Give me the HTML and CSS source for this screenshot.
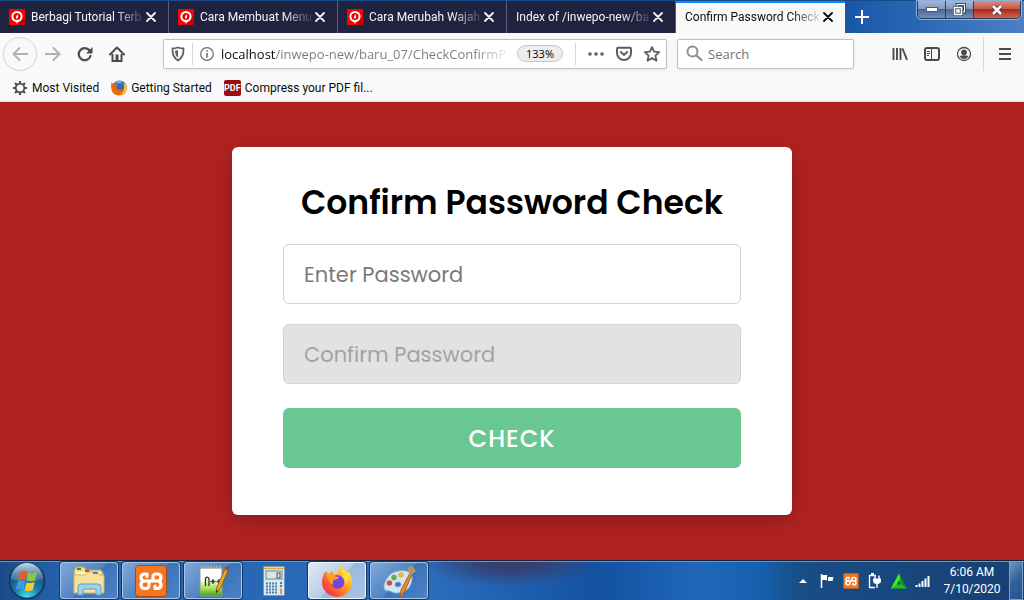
FILE: index.html
```
<!DOCTYPE html>
<html lang="en">
<head>
  <meta charset="UTF-8">
  <meta name="viewport" content="width=device-width, initial-scale=1.0">
  <title>Confirm Password Check</title>
  <link rel="stylesheet" href="styles.css">
</head>
<body>
  <svg class="sprite" aria-hidden="true">
    <symbol id="pin" viewBox="0 0 16 16">
      <rect width="16" height="16" fill="#f00"/>
      <path d="M11 11 L14 7 L16 9 V16 H8z" fill="#c80000"/>
      <path d="M5 11 H11 L8 15z" fill="#f5b5b5"/>
      <circle cx="8" cy="7.500" r="4.600" fill="#e00" stroke="#fff" stroke-width="2"/>
      <path d="M9 5 L7 7.500 V9.500 H8.500 L9 7.500z" fill="#fff"/>
    </symbol>
    <symbol id="close" viewBox="0 0 10 10">
      <path d="M1 1 L9 9 M9 1 L1 9" fill="none" stroke="currentColor" stroke-width="1.800" stroke-linecap="round"/>
    </symbol>
    <symbol id="xampp" viewBox="0 0 32 32">
      <rect x="0.500" y="0.500" width="31" height="31" rx="3" fill="#f37623" stroke="#a84a10"/>
      <path d="M12 11.500 V9 H10 Q6 9 6 12.500 Q6 16 10 16 Q6 16 6 20 Q6 23.500 10 23.500 H11 Q14 23.500 14 20 V18 Q14 16 16 16 Q18 16 18 14 V12 Q18 9 21 9 H22 Q26 9 26 12.500 Q26 16 22 16 Q26 16 26 20 Q26 23.500 22 23.500 H20 V21 M10 16 H22" fill="none" stroke="#fff" stroke-width="3.200" stroke-linejoin="round" stroke-linecap="round"/>
    </symbol>
  </svg>

  <header class="browser">
    <div class="tab-strip">
      <div class="tab">
        <svg class="favicon"><use href="#pin"/></svg>
        <button class="tab-title">Berbagi Tutorial Terb</button>
        <button class="tab-close" aria-label="Close tab"><svg><use href="#close"/></svg></button>
      </div>
      <div class="tab">
        <svg class="favicon"><use href="#pin"/></svg>
        <button class="tab-title">Cara Membuat Menu</button>
        <button class="tab-close" aria-label="Close tab"><svg><use href="#close"/></svg></button>
      </div>
      <div class="tab">
        <svg class="favicon"><use href="#pin"/></svg>
        <button class="tab-title">Cara Merubah Wajah</button>
        <button class="tab-close" aria-label="Close tab"><svg><use href="#close"/></svg></button>
      </div>
      <div class="tab">
        <button class="tab-title">Index of /inwepo-new/ba</button>
        <button class="tab-close" aria-label="Close tab"><svg><use href="#close"/></svg></button>
      </div>
      <div class="tab active">
        <button class="tab-title">Confirm Password Check</button>
        <button class="tab-close" aria-label="Close tab"><svg><use href="#close"/></svg></button>
      </div>
      <button class="new-tab" aria-label="New tab">
        <svg width="14" height="14"><path d="M7 0 V14 M0 7 H14" stroke="#fff" stroke-width="2"/></svg>
      </button>
      <div class="window-buttons">
        <button class="minimize" aria-label="Minimize">
          <svg width="12" height="6"><rect x="0.500" y="0.500" width="11" height="4" fill="#fff" stroke="#4b5870"/></svg>
        </button>
        <button class="restore" aria-label="Restore">
          <svg width="13" height="13"><path d="M4 1.500 H11.500 V9 H4z" fill="#8fa3c4" stroke="#3f4d68" stroke-width="3"/><path d="M4 1.500 H11.500 V9 H4z" fill="none" stroke="#fff"/><path d="M1.500 4.500 H8.500 V11.500 H1.500z" fill="#61759a" stroke="#3f4d68" stroke-width="3"/><path d="M1.500 4.500 H8.500 V11.500 H1.500z M4 7 H6 V9 H4z" fill="none" stroke="#fff" stroke-width="1.500"/></svg>
        </button>
        <button class="exit" aria-label="Close">
          <svg width="12" height="12"><path d="M2 2 L10 10 M10 2 L2 10" stroke="#54313a" stroke-width="4.500"/><path d="M2 2 L10 10 M10 2 L2 10" stroke="#fff" stroke-width="2.600"/></svg>
        </button>
      </div>
    </div>

    <div class="toolbar">
      <button class="tool back" aria-label="Back">
        <svg width="16" height="16"><path d="M15.500 8 H1.500 M7.500 2 L1.500 8 L7.500 14" fill="none" stroke="#b1b1b3" stroke-width="2" stroke-linecap="round" stroke-linejoin="round"/></svg>
      </button>
      <button class="tool" aria-label="Forward">
        <svg width="16" height="16"><path d="M0.500 8 H14.500 M8.500 2 L14.500 8 L8.500 14" fill="none" stroke="#b1b1b3" stroke-width="2" stroke-linecap="round" stroke-linejoin="round"/></svg>
      </button>
      <button class="tool" aria-label="Reload">
        <svg width="16" height="16"><path d="M12.500 4.500 A6 6 0 1 0 13.500 10" fill="none" stroke="#4a4a4f" stroke-width="2.200" stroke-linecap="round"/><path d="M15.500 1 V7.500 H9z" fill="#4a4a4f"/></svg>
      </button>
      <button class="tool" aria-label="Home">
        <svg width="16" height="16"><path d="M1 8.500 L8 1.500 L15 8.500" fill="none" stroke="#4a4a4f" stroke-width="2" stroke-linecap="round" stroke-linejoin="round"/><path d="M3.500 8 V15 H12.500 V8" fill="none" stroke="#4a4a4f" stroke-width="2"/><path d="M6.500 8.500 H9.500 V15 H6.500z" fill="#4a4a4f"/></svg>
      </button>

      <div class="field url-field">
        <svg width="14" height="16"><path d="M7 1.500 Q10 2.500 12.500 2.500 Q13 11 7 14.500 Q1 11 1.500 2.500 Q4 2.500 7 1.500z" fill="none" stroke="#5e5e62" stroke-width="1.800" stroke-linejoin="round"/><path d="M7 4 Q5.500 4.500 4 4.700 Q4.200 9.500 7 11.700z" fill="#5e5e62"/></svg>
        <span class="divider"></span>
        <svg width="14" height="14"><circle cx="7" cy="7" r="6.300" fill="none" stroke="#6a6a6e" stroke-width="1.200"/><path d="M7 6 V10.500 M7 3.200 V4.800" stroke="#6a6a6e" stroke-width="1.600"/></svg>
        <input type="text" class="url" aria-label="Address" value="localhost/inwepo-new/baru_07/CheckConfirmP">
        <button class="zoom">133%</button>
        <span class="divider"></span>
        <button class="page-action" aria-label="Page actions">
          <svg width="16" height="16"><g fill="#5e5e62"><circle cx="2" cy="8" r="1.800"/><circle cx="8" cy="8" r="1.800"/><circle cx="14" cy="8" r="1.800"/></g></svg>
        </button>
        <button class="page-action" aria-label="Save to Pocket">
          <svg width="16" height="16"><path d="M2 1.800 H14 Q15 1.800 15 3 V7 A7 7 0 0 1 1 7 V3 Q1 1.800 2 1.800z" fill="none" stroke="#5e5e62" stroke-width="2"/><path d="M4.800 6 L8 9 L11.200 6" fill="none" stroke="#5e5e62" stroke-width="2" stroke-linecap="round"/></svg>
        </button>
        <button class="page-action" aria-label="Bookmark this page">
          <svg width="16" height="16"><path d="M8 1 L10.100 5.700 L15.200 6.200 L11.400 9.600 L12.500 14.700 L8 12.100 L3.500 14.700 L4.600 9.600 L0.800 6.200 L5.900 5.700z" fill="none" stroke="#5e5e62" stroke-width="1.800" stroke-linejoin="round"/></svg>
        </button>
      </div>

      <div class="field search-field">
        <svg width="17" height="17"><circle cx="6.500" cy="6.500" r="5" fill="none" stroke="#8f8f92" stroke-width="2"/><path d="M10.200 10.200 L15.500 15" stroke="#8f8f92" stroke-width="2.200" stroke-linecap="round"/></svg>
        <input type="text" class="search" aria-label="Search" placeholder="Search">
      </div>

      <div class="tool-group">
        <button class="tool" aria-label="Library">
          <svg width="16" height="16"><path d="M1.500 2 V14 M5 2 V14 M8.500 2 V14 M10.500 2.500 L15 13.800" fill="none" stroke="#4a4a4f" stroke-width="1.900"/></svg>
        </button>
        <button class="tool" aria-label="Sidebars">
          <svg width="16" height="16"><rect x="1" y="2" width="14" height="12" rx="2" fill="none" stroke="#4a4a4f" stroke-width="2"/><path d="M7.500 2 V14" stroke="#4a4a4f"/><path d="M3 5.500 H6 M3 7.500 H6 M3 9.500 H5" stroke="#4a4a4f"/></svg>
        </button>
        <button class="tool" aria-label="Account">
          <svg width="16" height="16"><circle cx="8" cy="8" r="6.500" fill="none" stroke="#4a4a4f" stroke-width="1.300"/><circle cx="8" cy="6.300" r="2.900" fill="#4a4a4f"/><path d="M3.500 10 Q8 8.500 12.500 10 Q11 13 8 13 Q5 13 3.500 10z" fill="#4a4a4f"/></svg>
        </button>
      </div>
      <button class="tool menu" aria-label="Open menu">
        <svg width="14" height="14"><path d="M1 2 H13 M1 7 H13 M1 12 H13" stroke="#4a4a4f" stroke-width="2"/></svg>
      </button>
    </div>

    <nav class="bookmarks">
      <a href="#">
        <svg width="16" height="16"><circle cx="8" cy="8" r="4.300" fill="none" stroke="#4a4a4f" stroke-width="1.700"/><path d="M8 1 V3.500 M8 12.500 V15 M1 8 H3.500 M12.500 8 H15 M3 3 L4.800 4.800 M11.200 11.200 L13 13 M13 3 L11.200 4.800 M4.800 11.200 L3 13" stroke="#4a4a4f" stroke-width="2"/></svg>
        Most Visited
      </a>
      <a href="#">
        <svg width="16" height="16"><circle cx="8.500" cy="7.500" r="7" fill="#2a6fb8"/><path d="M4 2 Q8 0 12 2 Q9 4 6 3.500z" fill="#6db9e8"/><path d="M0.500 2.500 L3 4 Q6 3.500 7 5.500 Q5 6 5.500 8 Q7 11 11 9 Q8.500 13 13 8 Q13.500 5 12.500 3 Q16 5 15.800 9 Q14.500 15.500 8 15.500 Q1.500 15 0.300 9 Q-0.200 5 0.500 2.500z" fill="#e66a10"/><path d="M12.500 3 Q16 5 15.800 9 Q14.500 14.500 9 15 Q15 11 12.500 3z" fill="#fbc332"/></svg>
        Getting Started
      </a>
      <a href="#">
        <span class="pdf">PDF</span>
        Compress your PDF fil...
      </a>
    </nav>
  </header>

  <main class="page">
    <form class="card">
      <h1>Confirm Password Check</h1>
      <label class="hidden-label" for="password">Enter Password</label>
      <input type="password" id="password" placeholder="Enter Password">
      <label class="hidden-label" for="confirm">Confirm Password</label>
      <input type="password" id="confirm" placeholder="Confirm Password" disabled>
      <button type="button" class="check">CHECK</button>
    </form>
  </main>

  <footer class="taskbar">
    <button class="start" aria-label="Start">
      <svg width="38" height="38" viewBox="0 0 38 38">
        <defs>
          <radialGradient id="orb" cx="50%" cy="95%" r="85%"><stop offset="0" stop-color="#40e0f5"/><stop offset="0.450" stop-color="#1678a8"/><stop offset="1" stop-color="#14466f"/></radialGradient>
          <linearGradient id="shine" x2="0" y2="1"><stop offset="0" stop-color="#c9dcec"/><stop offset="1" stop-color="#5687a8" stop-opacity="0.500"/></linearGradient>
        </defs>
        <circle cx="19" cy="19" r="17.500" fill="url(#orb)" stroke="#153556" stroke-width="1.500"/>
        <path d="M3 17 A16 16 0 0 1 35 17 Q19 22 3 17z" fill="url(#shine)"/>
        <path d="M12 10 Q16 8 19 10 L17.500 18 Q14 16.500 10 18z" fill="#ea5a24"/>
        <path d="M20 10.500 Q24 12.500 29 10 L27 18.500 Q23 20.500 18.700 18.500z" fill="#8cc63e"/>
        <path d="M9.700 19.500 Q13.500 17.500 17.200 19.700 L15.500 27.500 Q12 26 7.700 27.500z" fill="#3a9fe0"/>
        <path d="M18.400 20.200 Q22.500 22 26.700 20 L24.800 28 Q21 30 16.700 28.200z" fill="#fcc72c"/>
      </svg>
    </button>
    <button class="task" aria-label="Windows Explorer">
      <svg width="34" height="32" viewBox="0 0 34 32">
        <path d="M2 5 L4 2 H12 L14 5 H29 L31 8 V28 H2z" fill="#f1dc8e" stroke="#b99d4a"/>
        <path d="M4 7 H28 V27 H4z" fill="#fff5c5"/>
        <path d="M2 10 H13 L16 7 H25 L27 10 H32 V28 H2z" fill="#f6e39b" stroke="#cdb264"/>
        <rect x="5" y="3" width="4" height="2" fill="#19a02c"/><rect x="13" y="5" width="4" height="2" fill="#d7452b"/><rect x="21" y="7" width="5" height="2" fill="#2a8be0"/>
        <path d="M6 30 V22 Q6 19 9 19 H26 Q29 19 29 22 V30 H24 V24 H11 V30z" fill="#9ed3ee" stroke="#5d9cc4"/>
      </svg>
    </button>
    <button class="task" aria-label="XAMPP">
      <svg width="32" height="32"><use href="#xampp"/></svg>
    </button>
    <button class="task" aria-label="Notepad++">
      <svg width="32" height="32" viewBox="0 0 32 32">
        <defs><linearGradient id="note" x2="0" y2="1"><stop offset="0.400" stop-color="#fff"/><stop offset="0.750" stop-color="#a5dc4a"/><stop offset="1" stop-color="#39a01e"/></linearGradient></defs>
        <rect x="3" y="3" width="22" height="28" fill="url(#note)" stroke="#8a9a86"/>
        <path d="M4 2 H25" stroke="#a5a5a5" stroke-width="3" stroke-dasharray="2 1"/>
        <path d="M8.500 21 V13 Q11.500 11 12 14 V21 M13.500 16.500 H18.500 M16 14 V19 M19.500 16.500 H24.500 M22 14 V19" fill="none" stroke="#26381f" stroke-width="1.300"/>
        <path d="M19 28 L20 22 L28 4 L31 5.500 L23 24z" fill="#f2a72a" stroke="#94641c"/><path d="M28 4 L29 1 L32 2 L31 5.500z" fill="#b63b37"/><path d="M19 28 L19.500 25 L21.500 26z" fill="#333"/>
      </svg>
    </button>
    <button class="task closed" aria-label="Calculator">
      <svg width="32" height="32" viewBox="0 0 32 32">
        <rect x="4.500" y="1.500" width="21" height="29" rx="1" fill="#d7e9f4" stroke="#7598b5"/>
        <path d="M5 3.500 H25" stroke="#f3a02e" stroke-width="1.500"/>
        <rect x="7" y="6" width="16" height="8" fill="#dde5dc" stroke="#6d8a9c"/>
        <rect x="18" y="8" width="3" height="5" fill="none" stroke="#415766"/>
        <path d="M7 18.500 H19 M7 21.500 H19 M7 24.500 H19 M7 27.500 H19" stroke="#527da0" stroke-width="2" stroke-dasharray="2 1"/>
        <path d="M22 17 V23" stroke="#527da0" stroke-width="2" stroke-dasharray="2 1"/><path d="M22 23.500 V29" stroke="#ef9929" stroke-width="2"/>
      </svg>
    </button>
    <button class="task current" aria-label="Firefox">
      <svg width="32" height="32" viewBox="0 0 32 32">
        <defs><linearGradient id="fox" x1="1" x2="0" y2="1"><stop offset="0.100" stop-color="#fff04a"/><stop offset="0.450" stop-color="#ff9a1f"/><stop offset="0.750" stop-color="#ff4a38"/><stop offset="1" stop-color="#e31587"/></linearGradient></defs>
        <path d="M19 1 Q23 3 25 7 Q27 8 27 6 Q31 11 31 17 A15 15 0 0 1 1 17 Q1 11 5 6 Q6 9 8 9 Q10 7 12 6 V9 Q16 10 17 8 Q17 4 19 1z" fill="url(#fox)"/>
        <circle cx="16.500" cy="17" r="6.800" fill="#7542e5"/>
        <path d="M5 9 Q10 8 13 11 L18 12 Q18 14 13 15 Q11 17 12 20 Q8 18 7 14z" fill="#ff9c25"/>
        <path d="M20 4 Q23 9 21 12 Q25 14 25 20 Q30 12 25 7 Q22 5 20 4z" fill="#ffde38"/>
      </svg>
    </button>
    <button class="task" aria-label="Paint">
      <svg width="34" height="32" viewBox="0 0 34 32">
        <path d="M16 6 C27 4 31 9 30 15 C29 23 23 28 16 28 C10 29 9 25 5 26 C1 25 1 20 4 15 Q8 7 16 6z M16 17 A3 2.500 0 1 0 16 22 A3 2.500 0 1 0 16 17z" fill="#cfe7f5" stroke="#78aacb" fill-rule="evenodd"/>
        <circle cx="7.500" cy="18" r="2.700" fill="#e34739"/><circle cx="12" cy="12.500" r="2.700" fill="#58b544"/><circle cx="19" cy="10" r="2.800" fill="#f5b52e"/>
        <path d="M18 32 L19 25 L28 8 L30 9 L23 26z" fill="#e48a2d" stroke="#b0641c"/><path d="M25 3 L30 0.500 L34 6 L29 10 L27 8z" fill="#b9906a"/>
      </svg>
    </button>

    <div class="tray">
      <button aria-label="Show hidden icons"><svg width="16" height="16"><path d="M4 10 L8 6 L12 10z" fill="#fff"/></svg></button>
      <button aria-label="Action Center"><svg width="16" height="16"><path d="M2.500 1 V15" stroke="#fff" stroke-width="1.500"/><path d="M3 2 H8 L9 4 H14.500 L13.500 8 H8 L7 7 H3z" fill="#fff"/><path d="M8.500 3 V8" stroke="#18457c"/></svg></button>
      <button aria-label="XAMPP Control Panel"><svg width="16" height="16"><use href="#xampp"/></svg></button>
      <button aria-label="Power"><svg width="16" height="16"><path d="M9 2.500 H2.500 V14.500 H8" fill="none" stroke="#fff" stroke-width="1.300"/><path d="M4 1 H7" stroke="#fff" stroke-width="2"/><path d="M6 5.500 H14 V8 Q14 11 10 11 Q6 11 6 8z" fill="#fff"/><path d="M8 2.500 V6 M12 2.500 V6 M10 11 V15" fill="none" stroke="#fff" stroke-width="1.400"/></svg></button>
      <button aria-label="Sync"><svg width="16" height="16"><path d="M8 0.500 L16 15.500 H0z" fill="#15c515"/><path d="M8 0.500 L16 15.500 L11 12z" fill="#0b8a14"/><path d="M8 7.500 L10 11.500 H6z" fill="#174c7c"/><path d="M8 0.500 L0 15.500 L5 12 L9 5z" fill="#45ea2f"/></svg></button>
      <button aria-label="Network"><svg width="16" height="16"><path d="M1.500 12 V14 M4.500 10.500 V14 M7.500 8 V14 M10.500 5.500 V14 M13.500 3 V14" stroke="#fff" stroke-width="2"/></svg></button>
      <button class="clock"><time>6:06 AM</time><time>7/10/2020</time></button>
    </div>
    <button class="show-desktop" aria-label="Show desktop"></button>
  </footer>
</body>
</html>
```
FILE: styles.css
```
* {
  box-sizing: border-box;
}

body {
  margin: 0;
  min-height: 100vh;
  display: flex;
  flex-direction: column;
  font-family: "Segoe UI", Roboto, sans-serif;
  font-size: 12px;
  background: #b22222;
}

button {
  padding: 0;
  border: none;
  background: none;
  font: inherit;
  color: inherit;
}

svg {
  display: block;
  flex: none;
}

.sprite {
  position: absolute;
  width: 0;
  height: 0;
}

/* tabs */
.tab-strip {
  display: flex;
  height: 33px;
  border-top: 1px solid #174a86;
  background: linear-gradient(90deg, #1450a0 80%, #2a68b6 90%, #4c80c2);
}

.tab {
  flex: 0 1 169px;
  min-width: 0;
  display: flex;
  align-items: center;
  padding: 0 12px 0 9px;
  background: #20233f;
  color: #f4f4f8;
  border-right: 1px solid #5b5d73;
}

.tab.active {
  background: #f9f9fa;
  color: #0c0c0d;
  border-right: none;
  box-shadow: inset 0 2px #0a84ff;
}

.favicon {
  width: 16px;
  height: 16px;
  margin-right: 6px;
}

.tab-title {
  flex: 1;
  min-width: 0;
  overflow: hidden;
  white-space: nowrap;
  text-align: left;
  -webkit-mask-image: linear-gradient(270deg, transparent, #000 32px);
  mask-image: linear-gradient(270deg, transparent, #000 32px);
}

.tab-close svg {
  width: 10px;
  height: 10px;
}

.new-tab {
  width: 34px;
  display: flex;
  align-items: center;
  justify-content: center;
}

.window-buttons {
  display: flex;
  height: 18px;
  margin: 0 3px 0 auto;
  border: 1px solid #2b3d5c;
  border-top: none;
  border-radius: 0 0 5px 5px;
  box-shadow: 0 0 0 1px #8fb0dc;
  overflow: hidden;
}

.window-buttons button {
  width: 28px;
  display: flex;
  align-items: center;
  justify-content: center;
  background: linear-gradient(#a3b9da, #8399bd 45%, #4d6894 50%, #6f90bf);
  border-right: 1px solid #2b3d5c;
}

.window-buttons .exit {
  width: 46px;
  border-right: none;
  background: linear-gradient(#d98f80, #c7594a 45%, #a82c1c 50%, #cf6547);
}

/* toolbar */
.toolbar {
  display: flex;
  align-items: center;
  height: 41px;
  padding: 0 3px;
  background: #f9f9fa;
}

.tool {
  width: 32px;
  height: 34px;
  display: flex;
  align-items: center;
  justify-content: center;
}

.back {
  width: 34px;
  border: 1px solid #d2d2d4;
  border-radius: 50%;
}

.field {
  display: flex;
  align-items: center;
  min-width: 0;
  height: 30px;
  background: #fff;
  border: 1px solid #bfbfc1;
  border-radius: 2px;
  box-shadow: 0 1px 4px rgba(0, 0, 0, 0.05);
}

.field input {
  flex: 1;
  min-width: 0;
  padding: 0;
  border: none;
  outline: none;
  background: none;
  font-family: "Segoe UI", "Open Sans", sans-serif;
  font-size: 13px;
}

.url-field {
  flex: 1;
  gap: 7px;
  margin-left: 30px;
  padding: 0 6px 0 7px;
}

.divider {
  width: 1px;
  height: 22px;
  background: #d7d7db;
}

.field .url {
  color: transparent;
  background: linear-gradient(90deg, #0c0c0d 54px, #7a7a7e 54px, #7a7a7e calc(100% - 36px), transparent);
  -webkit-background-clip: text;
  background-clip: text;
}

.zoom {
  height: 17px;
  padding: 0 8px;
  margin-right: 5px;
  border: 1px solid #c8c8ca;
  border-radius: 9px;
  background: #ededf0;
  font-family: "Segoe UI", "Open Sans", sans-serif;
  font-size: 11px;
  line-height: 15px;
}

.page-action {
  margin-left: 5px;
}

.search-field {
  flex: 0 1 177px;
  gap: 5px;
  margin: 0 30px 0 10px;
  padding: 0 8px;
}

.search::placeholder {
  color: #737373;
}

.tool-group {
  display: flex;
  border-right: 1px solid #d7d7db;
  padding-right: 3px;
}

.menu {
  width: 37px;
  padding-left: 4px;
}

.bookmarks {
  display: flex;
  gap: 12px;
  height: 28px;
  padding: 0 12px;
  background: #f9f9fa;
  border-bottom: 1px solid #dcdcde;
}

.bookmarks a {
  display: flex;
  align-items: center;
  gap: 4px;
  color: #0c0c0d;
  text-decoration: none;
}

.pdf {
  width: 17px;
  height: 16px;
  border-radius: 2px;
  background: #9c0c0c;
  color: #fff;
  font-size: 9px;
  font-weight: bold;
  line-height: 16px;
  text-align: center;
}

/* page */
.page {
  flex: 1;
  display: flex;
  align-items: center;
  justify-content: center;
  padding: 20px;
}

.card {
  width: 560px;
  padding: 28px 51px 47px;
  background: #fff;
  border-radius: 6px;
  box-shadow: 0 5px 20px rgba(0, 0, 0, 0.25);
  font-family: Poppins, sans-serif;
}

.card h1 {
  margin: 0 0 13px;
  font-size: 33px;
  font-weight: 600;
  line-height: 56px;
  text-align: center;
  white-space: nowrap;
}

.hidden-label {
  position: absolute;
  width: 1px;
  height: 1px;
  overflow: hidden;
  clip-path: inset(50%);
}

.card input {
  display: block;
  width: 100%;
  height: 60px;
  margin-bottom: 20px;
  padding: 0 20px;
  border: 1px solid #d3d3d3;
  border-radius: 6px;
  background: #fff;
  font-family: inherit;
  font-size: 21px;
}

.card input::placeholder {
  color: #7a7a7a;
}

.card input:disabled {
  background: #e2e2e2;
}

.card input:disabled::placeholder {
  color: #a3a3a3;
}

.check {
  width: 100%;
  height: 60px;
  margin-top: 4px;
  border-radius: 6px;
  background: #69c792;
  color: #fff;
  font-size: 24px;
  font-weight: 500;
  letter-spacing: 1px;
}

/* taskbar */
.taskbar {
  display: flex;
  gap: 4px;
  height: 40px;
  border-top: 1px solid #15233c;
  box-shadow: inset 0 1px #7193bd;
  background:
    radial-gradient(ellipse 90px 26px at 510px 0, #35406f 30%, transparent),
    linear-gradient(90deg, #1b4b86, #2462ad 60px, #2b6dbd 430px, #1452a2 600px, #2067b8 700px, #1660ae 760px, #194d86 800px, #173f74);
}

.start {
  width: 56px;
  padding-left: 8px;
}

.task {
  width: 58px;
  margin: 1px 0;
  display: flex;
  align-items: center;
  justify-content: center;
  border: 1px solid #a8c6e8;
  border-radius: 3px;
  box-shadow: 0 0 0 1px #17365f;
  background: linear-gradient(135deg, #82a9d8, #4f83c2 50%, #3d74b8 51%, #4a82c8);
}

.task.closed {
  border-color: transparent;
  box-shadow: none;
  background: none;
}

.task.current {
  border-color: #f0f6fc;
  background: linear-gradient(135deg, #e0eaf6, #b7cce6 50%, #9ab8dc 51%, #a9c5e6);
}

.tray {
  display: flex;
  align-items: center;
  gap: 8px;
  margin-left: auto;
  color: #fff;
}

.clock {
  width: 66px;
  line-height: 17px;
  text-align: center;
}

.clock time {
  display: block;
}

.show-desktop {
  width: 14px;
  margin-right: 1px;
  border: 1px solid #7e9fc6;
  background: linear-gradient(135deg, #7396bf, #2f619c 50%, #245590);
}
```
